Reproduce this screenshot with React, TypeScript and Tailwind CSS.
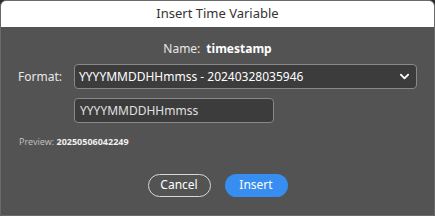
export default function App() {
  return (
    <div className="w-[435px] h-[216px] bg-[#2a2a2a] font-['Noto_Sans',sans-serif]">
      <div className="h-full flex flex-col rounded-t-[6px] border border-[#6a6a6a] overflow-hidden bg-[#535353]">
        <div className="h-[26px] bg-white flex items-center justify-center text-[13px] text-[#333]">
          Insert Time Variable
        </div>
        <div className="flex-1 flex flex-col px-[17px]">
          <div className="mt-[13px] flex items-center justify-center gap-[6px] text-[12px] text-[#e8e8e8]">
            <span>Name:</span>
            <span className="font-bold text-white">timestamp</span>
          </div>
          <div className="mt-[6px] flex items-center">
            <span className="w-[56px] text-[12px] text-[#e8e8e8]">Format:</span>
            <div className="flex-1 h-[25px] rounded-[4px] border border-[#888] bg-[#3c3c3c] flex items-center justify-between pl-[4px] pr-[6px] text-[12px] text-white">
              <span>YYYYMMDDHHmmss - 20240328035946</span>
              <svg width="11" height="11" viewBox="0 0 12 12" fill="none">
                <path d="M2 4l4 4 4-4" stroke="white" strokeWidth="2" strokeLinecap="round" strokeLinejoin="round" />
              </svg>
            </div>
          </div>
          <div className="mt-[9px] pl-[56px]">
            <div className="w-[200px] h-[25px] rounded-[4px] border border-[#888] bg-[#3c3c3c] flex items-center px-[5px] text-[12px] text-[#e0e0e0]">
              YYYYMMDDHHmmss
            </div>
          </div>
          <div className="mt-[12px] pl-[1px] text-[9px] text-[#bdbdbd]">
            Preview: <span className="font-bold text-[#f0f0f0]">20250506042249</span>
          </div>
          <div className="mt-[25px] flex justify-center gap-[14px]">
            <button className="w-[63px] h-[23px] rounded-full border border-[#d8d8d8] text-[12px] text-white">
              Cancel
            </button>
            <button className="w-[63px] h-[23px] rounded-full bg-[#378ef0] text-[12px] text-white">
              Insert
            </button>
          </div>
        </div>
      </div>
    </div>
  );
}
